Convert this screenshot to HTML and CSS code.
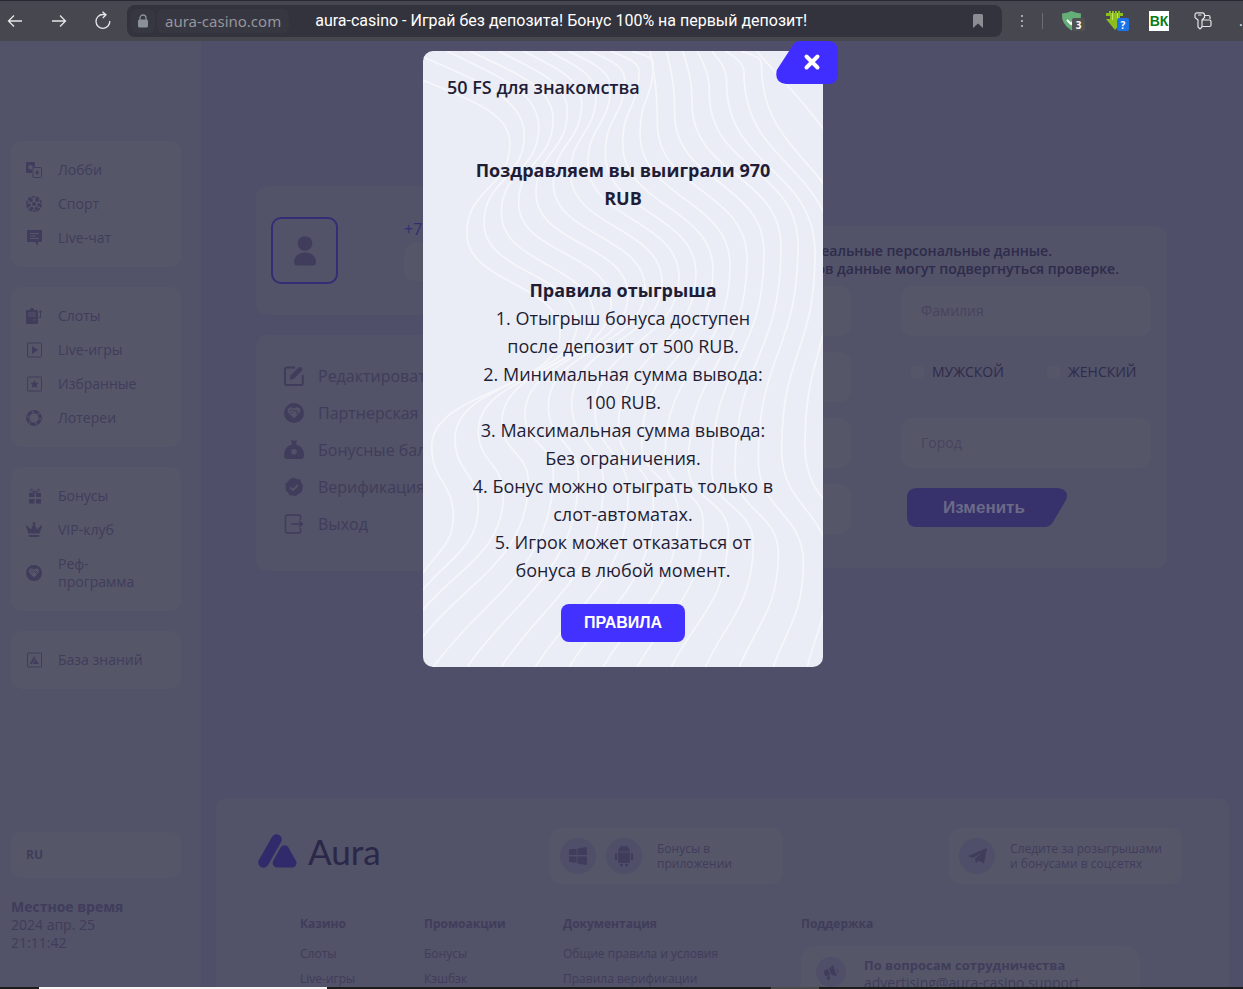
FILE: index.html
```html
<!DOCTYPE html>
<html lang="ru">
<head>
<meta charset="utf-8">
<meta name="viewport" content="width=device-width, initial-scale=1">
<title>aura-casino - Играй без депозита! Бонус 100% на первый депозит!</title>
<link rel="stylesheet" href="styles.css">
</head>
<body>
<svg class="defs" aria-hidden="true">
  <symbol id="handshake" viewBox="0 0 20 20"><path fill="currentColor" fill-rule="evenodd" d="M10 0a10 10 0 1 1 0 20 10 10 0 0 1 0-20zM4.300 5.500C3.200 7 3.500 9 5 10.500l5 5 5-5c1.500-1.500 1.800-3.500.7-5C14.500 4 12.500 4 11 5l-1 .7L9 5c-1.500-1-3.500-1-4.700.5z"/><path d="M5.500 8 8 6.500l2 2 2-1.500 3.500 3.500M7 10.500l1.500-1M12 9l2 3" fill="none" stroke="currentColor" stroke-width="1"/></symbol>
</svg>

<header class="browser">
  <button class="tool" aria-label="Назад"><svg width="16" height="16" viewBox="0 0 16 16"><path d="M15 8H1.500M7 2.500 1.500 8 7 13.500"/></svg></button>
  <button class="tool" aria-label="Вперёд"><svg width="16" height="16" viewBox="0 0 16 16"><path d="M1 8h13.500M9 2.500 14.500 8 9 13.500"/></svg></button>
  <button class="tool" aria-label="Обновить"><svg width="18" height="20" viewBox="0 0 18 20"><path d="M15.800 10a6.900 6.900 0 1 1-7-6.500H12M8.500.8 12 3.700 8.800 7"/></svg></button>
  <div class="address">
    <span class="lock"><svg width="12" height="14" viewBox="0 0 12 14"><rect x="1" y="5.500" width="10" height="8" rx="1.500" fill="currentColor"/><path d="M3 6V4a3 3 0 0 1 6 0v2" fill="none" stroke="currentColor" stroke-width="1.300"/></svg></span>
    <span class="host">aura-casino.com</span>
    <span class="page-title">aura-casino - Играй без депозита! Бонус 100% на первый депозит!</span>
    <button class="bookmark" aria-label="Закладка"><svg width="10" height="14" viewBox="0 0 10 14"><path d="M0 1.500Q0 0 1.500 0h7Q10 0 10 1.500V14L5 9.500 0 14z" fill="currentColor"/></svg></button>
  </div>
  <button class="dots" aria-label="Меню"><svg width="4" height="14" viewBox="0 0 4 14"><path d="M1 1h2v2H1zM1 6h2v2H1zM1 11h2v2H1z" fill="currentColor"/></svg></button>
  <span class="divider"></span>
  <div class="extensions">
    <svg width="24" height="22" viewBox="0 0 24 22"><path d="M1 3.500Q6 3 10.500 1 15 3 20 3.500 21 14 10.500 20.500 0 14 1 3.500z" fill="#65ae78"/><path d="m6 10 4 4 3-4" fill="none" stroke="#fff" stroke-width="2"/><rect x="11" y="8" width="13" height="13" rx="2" fill="#515151"/><text x="17.500" y="18.500" class="badge-text">3</text></svg>
    <svg width="24" height="22" viewBox="0 0 24 22"><path d="M1 3h3V1h2v2h1V1h2v2h1V1h2v2h1V1h2v2h3v3h-3v3h4L10 20 1 9h4V6H1z" fill="#8cbf1e"/><path d="M7.500 3v7M12.500 3v7" stroke="#c3e160" stroke-width="1"/><rect x="12" y="8" width="12" height="13" rx="2" fill="#1a73e8"/><text x="18" y="18.500" class="badge-text">?</text></svg>
    <span class="bk">ВК</span>
    <svg width="18" height="18" viewBox="0 0 18 18"><path d="M1 3Q1 .8 3 .8h5.500q2 0 2 2.200v2.500L8 8v7l-2 2-2-2V8L1 5.500zM4 3h3.500M10.500 3.500h4q1.500 0 1.500 1.500v2M8 8h7.500q1.500 0 1.500 1.500V13q0 1.500-1.500 1.500H8" class="key-line"/></svg>
    <span class="more">.</span>
  </div>
</header>

<div class="app">
  <aside class="sidebar">
    <nav class="side-nav">
      <ul class="side-card">
        <li><a href="#"><svg viewBox="0 0 16 16"><path fill="currentColor" fill-rule="evenodd" d="M1 0h7q1 0 1 1v3.500H7.500Q6 4.500 6 6v5H1q-1 0-1-1V1q0-1 1-1zm3.500 3a2 2 0 1 0 0 4.500A2.200 2.200 0 0 0 4.500 3z"/><rect x="7" y="5.500" width="8.500" height="10" rx="1" class="line"/><path fill="currentColor" d="m11.200 8 2 2.500-2 2.500-2-2.500z"/></svg>Лобби</a></li>
        <li><a href="#"><svg viewBox="0 0 16 16"><circle cx="8" cy="8" r="7.200" fill="none" stroke="currentColor" stroke-width="1.500" stroke-dasharray="3.500 1"/><g fill="currentColor"><circle cx="8" cy="8" r="2"/><circle cx="5" cy="4" r="2"/><circle cx="11" cy="4" r="2"/><circle cx="3" cy="9" r="1.800"/><circle cx="13" cy="9" r="1.800"/><circle cx="5.700" cy="12.500" r="1.800"/><circle cx="10.300" cy="12.500" r="1.800"/></g></svg>Спорт</a></li>
        <li><a href="#"><svg viewBox="0 0 16 16"><path fill="currentColor" fill-rule="evenodd" d="M2 0h13q1 0 1 1v10q0 1-1 1h-3v4l-3-4H2q-1 0-1-1V1q0-1 1-1zm2 3v1h9V3zm0 2.500v1h6v-1zM4 8v1h9V8z"/></svg>Live-чат</a></li>
      </ul>
      <ul class="side-card">
        <li><a href="#"><svg viewBox="0 0 16 16"><path fill="currentColor" fill-rule="evenodd" d="M4 2V1l1-1h2l1 1v1h3q1 0 1 1v12q0 1-1 1H1q-1 0-1-1V3q0-1 1-1zM2.500 4.500v4h7v-4zm4.500 7v.8h3v-.8z"/><path d="M4 5v3M6 5v3M8 5v3M12.500 9.500h2V4" class="line"/><circle cx="14.500" cy="3.800" r="1.300" fill="currentColor"/></svg>Слоты</a></li>
        <li><a href="#"><svg viewBox="0 0 16 16"><rect x="1.500" y="1" width="14" height="14" rx="1" class="line"/><path fill="currentColor" d="m6 4 6 4-6 4z"/></svg>Live-игры</a></li>
        <li><a href="#"><svg viewBox="0 0 16 16"><rect x="1.500" y="1" width="14" height="14" rx="1" class="line"/><path fill="currentColor" d="m8.500 4 1.200 2.700 2.800.3-2 2 .5 3-2.500-1.500L6 12l.5-3-2-2 2.800-.3z"/></svg>Избранные</a></li>
        <li><a href="#"><svg viewBox="0 0 16 16"><circle cx="8" cy="8" r="6.300" fill="none" stroke="currentColor" stroke-width="3.200"/><circle cx="8" cy="8" r="6.200" fill="none" stroke="#565669" stroke-width="1.400" stroke-dasharray="2 4.500"/></svg>Лотереи</a></li>
      </ul>
      <ul class="side-card">
        <li><a href="#"><svg viewBox="0 0 16 16"><path fill="currentColor" d="M3 5h5.500v4H3zM10 5h5v4h-5zM3 11h5.500v4.500H3zM10 11h5v4.500h-5z"/><path d="M9 4.500Q4 4 4.500 1.500 6-.5 9 4.500q3-5 4.500-3Q14 4 9 4.500" class="line"/></svg>Бонусы</a></li>
        <li><a href="#"><svg viewBox="0 0 16 16"><path fill="currentColor" d="m2.500 11.500-2-6a1 1 0 1 1 1.500-.8L5 7.500l2.300-4.700a1.400 1.400 0 1 1 1.400 0L11 7.500l3-2.800a1 1 0 1 1 1.500.8l-2 6zM2.500 13h11v1.500l-1 .5h-9l-1-.5z"/></svg>VIP-клуб</a></li>
        <li class="tall"><a href="#"><svg viewBox="0 0 20 20"><use href="#handshake"/></svg><span>Реф-<br>программа</span></a></li>
      </ul>
      <ul class="side-card">
        <li><a href="#"><svg viewBox="0 0 16 16"><rect x="1.500" y="1" width="14" height="14" rx="1" class="line"/><path fill="currentColor" d="M4 11.500 8 4.500l1.500.8L6 12H4zM9.800 7l3 5H7z"/></svg>База знаний</a></li>
      </ul>
    </nav>
    <button class="language">RU</button>
    <div class="clock"><b>Местное время</b><br>2024 апр. 25<br>21:11:42</div>
  </aside>

  <main class="main">
    <div class="account">
      <div class="account-side">
        <section class="card profile">
          <div class="avatar"><svg width="22" height="30" viewBox="0 0 22 30"><circle cx="11" cy="7.500" r="7.300" fill="currentColor"/><path fill="currentColor" d="M0 26C0 20 5 16.500 11 16.500S22 20 22 26q0 3.500-3 3.500H3Q0 29.500 0 26z"/></svg></div>
          <div class="profile-info"><span>+7</span><div class="profile-box"></div></div>
        </section>
        <section class="card">
          <ul class="account-menu">
            <li><a href="#"><svg viewBox="0 0 20 20"><path d="M11 1.500H2.500Q1 1.500 1 3v14.500Q1 19 2.500 19H17q1.800 0 1.800-1.500V9" fill="none" stroke="currentColor" stroke-width="2"/><path fill="currentColor" d="m6 14 .5-4.500 8-8q1.500-1 3 0 1.500 1.500.5 3l-8 8z"/></svg>Редактировать</a></li>
            <li><a href="#"><svg viewBox="0 0 20 20"><use href="#handshake"/></svg>Партнерская</a></li>
            <li><a href="#"><svg viewBox="0 0 20 20"><path fill="currentColor" fill-rule="evenodd" d="m7 0 3 1 3-1-1 4.500q8 2 8 10.500 0 4-3 4H3q-3 0-3-4Q0 6.500 8 4.500zm3 9a2.800 2.800 0 1 0 0 5.600A2.800 2.800 0 0 0 10 9z"/></svg>Бонусные баллы</a></li>
            <li><a href="#"><svg viewBox="0 0 20 20"><path fill="currentColor" d="m10 .5 3 1.800 3.300.2.800 3.200L19 8.500 18.500 12l-1 3.200-3 1.500L12 19l-3-.6-3.300-.2-1.600-2.800L1.500 13l.3-3.300L1.500 6.500 4.200 4.600 6 2z"/><path d="m6 10.500 3 2.500 5-5" fill="none" stroke="#535368" stroke-width="1.800"/></svg>Верификация</a></li>
            <li><a href="#"><svg viewBox="0 0 20 20"><path d="M16.500 6V3q0-2-2-2H3Q1.500 1 1.500 3v14q0 2 1.500 2h11.500q2 0 2-2v-3M7 10h11M15 7l3.500 3-3.500 3" fill="none" stroke="currentColor" stroke-width="1.500"/></svg>Выход</a></li>
          </ul>
        </section>
      </div>
      <form class="card details">
        <p class="notice"><span>Указывайте реальные персональные данные.</span><span class="wide">При выводе призов данные могут подвергнуться проверке.</span></p>
        <div class="fields">
          <input type="text" aria-label="Имя">
          <input type="text" placeholder="Фамилия" aria-label="Фамилия">
          <input type="text" aria-label="Дата рождения">
          <div class="gender">
            <label><input type="checkbox">МУЖСКОЙ</label>
            <label><input type="checkbox">ЖЕНСКИЙ</label>
          </div>
          <input type="text" aria-label="Страна">
          <input type="text" placeholder="Город" aria-label="Город">
          <input type="text" aria-label="Адрес">
          <button type="button" class="change"><svg viewBox="0 0 160 39" preserveAspectRatio="none"><path d="M10 0h141q12 2 8 12l-13 22q-3 5-9 5H10Q0 39 0 29V10Q0 0 10 0z" fill="#37316c"/></svg><span>Изменить</span></button>
        </div>
      </form>
    </div>

    <footer class="footer">
      <div class="footer-top">
        <a class="logo" href="#"><svg width="39" height="34" viewBox="0 0 39 34"><path d="M5.500 28.500 18.500 5.500" stroke="currentColor" stroke-width="10.500" stroke-linecap="round"/><path d="M26.500 15.800 34 29H19.200z" fill="currentColor" stroke="currentColor" stroke-width="9" stroke-linejoin="round"/></svg><span>Aura</span></a>
        <div class="promo app-promo">
          <span class="disc"><svg width="18" height="18" viewBox="0 0 18 18"><path fill="currentColor" d="M0 2.500 7.500 1.800V8H0zM8.500 1.500 18 0v8H8.500zM0 9.500h7.500v6.300L0 15zM8.500 9.500H18V18l-9.500-1.500z"/></svg></span>
          <span class="disc"><svg width="18" height="22" viewBox="0 0 18 22"><path fill="currentColor" d="M3 7.500h12V17q0 1-1 1H4q-1 0-1-1zM3 6.500Q3.300 3 6 1.700L5 .3l.5-.3 1.200 1.500q2.300-.7 4.600 0L12.500 0l.5.3-1 1.400q2.700 1.300 3 4.800zM0 8h2v7H0zM16 8h2v7h-2zM5 19h3v1a1.500 1.500 0 0 1-3 0zM10 19h3v1a1.500 1.500 0 0 1-3 0z"/></svg></span>
          <p>Бонусы в<br>приложении</p>
        </div>
        <div class="promo">
          <span class="disc"><svg width="19" height="16" viewBox="0 0 19 16"><path fill="currentColor" d="M0 8 19 0l-3 15.500-5.500-3L8 15.500l-1-5L15 4 5 10z"/></svg></span>
          <p>Следите за розыгрышами<br>и бонусами в соцсетях</p>
        </div>
      </div>
      <div class="footer-links">
        <section><h3>Казино</h3><a href="#">Слоты</a><a href="#">Live-игры</a></section>
        <section><h3>Промоакции</h3><a href="#">Бонусы</a><a href="#">Кэшбэк</a></section>
        <section><h3>Документация</h3><a href="#">Общие правила и условия</a><a href="#">Правила верификации</a></section>
        <section><h3>Поддержка</h3>
          <div class="support">
            <span class="disc small"><svg width="15" height="15" viewBox="0 0 15 15"><path fill="currentColor" d="m5 4 4-4 4 11-5.500-1zM0 5.500 4 4l2 6-4 1.200Q0 10 0 5.500zM2.500 12 6 11v3.500l-2.500.5zM12.500 3q3 1.500 1 5l-.5-.5q1.500-2-.5-4z"/></svg></span>
            <p><b>По вопросам сотрудничества</b><br>advertising@aura-casino.support</p>
          </div>
        </section>
      </div>
    </footer>
  </main>

  <div class="overlay">
    <section class="modal" role="dialog" aria-labelledby="modal-title">
      <svg class="waves" id="waves" viewBox="9 33 1200 1848" preserveAspectRatio="none" aria-hidden="true"></svg>
      <button class="close" aria-label="Закрыть"><svg width="62" height="43" viewBox="0 0 62 43"><path d="M24 0h28q10 0 10 10v23q0 10-10 10H10Q-2 42 .8 29L17 4q2.500-4 7-4z" fill="#402dff"/><path d="m30.500 15.500 11 11M41.500 15.500l-11 11" stroke="#fff" stroke-width="4" stroke-linecap="round"/></svg></button>
      <h2 id="modal-title">50 FS для знакомства</h2>
      <p class="win">Поздравляем вы выиграли 970<br>RUB</p>
      <div class="rules">
        <h3>Правила отыгрыша</h3>
        <p>1. Отыгрыш бонуса доступен<br>после депозит от 500 RUB.</p>
        <p>2. Минимальная сумма вывода:<br>100 RUB.</p>
        <p>3. Максимальная сумма вывода:<br>Без ограничения.</p>
        <p>4. Бонус можно отыграть только в<br>слот-автоматах.</p>
        <p>5. Игрок может отказаться от<br>бонуса в любой момент.</p>
      </div>
      <button class="rules-button">ПРАВИЛА</button>
    </section>
  </div>
</div>
<div class="taskbar"><span class="task active"></span><span class="task"></span></div>
<script src="waves.js"></script>
</body>
</html>
```
FILE: waves.js
```js
// Draws the flowing contour lines behind the dialog text.
const starts = [[9, 120], [9, 50], [80, 33], [150, 33], [235, 33], [310, 33], [385, 33], [445, 33], [510, 33],
  [570, 33], [635, 33], [690, 33], [740, 33], [788, 33], [832, 33], [876, 33], [918, 33], [963, 33], [1010, 33]];
const bellyY = [880, 850, 830, 790, 765, 745, 725, 710, 700, 690, 675, 655, 635, 620, 615, 640, 650, 660, 670];
const waistY = [1220, 1196, 1172, 1148, 1124, 1100, 1090, 1110, 1160, 1210, 1250, 1280, 1290, 1290, 1260, 1230, 1220, 1210, 1200];
const hipY = [1430, 1400, 1365, 1325, 1300, 1310, 1330, 1360, 1390, 1420, 1450, 1480, 1510, 1540, 1570, 1580, 1580, 1580, 1580];
const ends = [[9, 1600], [9, 1650], [9, 1710], [9, 1790]];

const svg = document.getElementById('waves');
starts.forEach((start, i) => {
  const points = [start];
  const shoulder = [270 + 43 * i, 310 - 24 * i];
  const neck = [140 + 52 * i, 580 - 30 * i];
  if (shoulder[1] > 60) points.push(shoulder);
  if (neck[1] > 60) points.push(neck);
  points.push([420 + 51 * i, bellyY[i]], [35 + 70 * i, waistY[i]], [100 + 75 * i, hipY[i]]);
  points.push(ends[i] || [40 + 102 * (i - 4), 1881]);

  let d = `M${points[0]}`;
  for (let k = 1; k < points.length; k++) {
    const [ax, ay] = points[k - 1];
    const [bx, by] = points[k];
    const h = by - ay;
    const first = k === 1 ? [ax + (bx - ax) * 0.5, ay + h * 0.3] : [ax, ay + h * 0.5];
    const second = k === points.length - 1 ? [bx + (ax - bx) * 0.4, by - h * 0.35] : [bx, by - h * 0.5];
    d += `C${first} ${second} ${bx},${by}`;
  }
  const path = document.createElementNS('http://www.w3.org/2000/svg', 'path');
  path.setAttribute('d', d);
  svg.appendChild(path);
});
```
FILE: styles.css
```css
* { box-sizing: border-box; }
body {
  margin: 0;
  height: 100vh;
  display: flex;
  flex-direction: column;
  overflow: hidden;
  background: #4f4f69;
  color: #3f3d5b;
  font: 14px/18px "Open Sans", "Noto Sans", sans-serif;
}
button, input { font: inherit; color: inherit; border: 0; padding: 0; background: none; }
a { color: inherit; text-decoration: none; }
ul { list-style: none; margin: 0; padding: 0; }
p, h2, h3 { margin: 0; }
svg { flex: none; display: block; }
.defs { position: absolute; width: 0; height: 0; }
.line { fill: none; stroke: currentColor; stroke-width: 1; }

/* Browser bar */
.browser {
  flex: none;
  height: 41px;
  display: flex;
  align-items: center;
  border-top: 1px solid #282833;
  background: #47474f;
  padding-left: 7px;
  overflow: hidden;
}
.tool { flex: none; display: flex; width: 16px; margin-right: 28px; justify-content: center; }
.tool svg { fill: none; stroke: #e6e6e8; stroke-width: 1.3; }
.address {
  flex: 1;
  display: flex;
  align-items: center;
  height: 32px;
  border-radius: 8px;
  background: #33333d;
  padding: 0 19px 0 4px;
  margin-left: -12px;
  min-width: 0;
}
.lock { width: 24px; height: 24px; display: grid; place-items: center; color: #8a9198; background: #363741; border-radius: 6px; }
.host {
  margin-left: 2px;
  padding: 0 8px;
  border-radius: 6px;
  background: #363741;
  color: #96969c;
  font: 15px/24px "Noto Sans", sans-serif;
}
.page-title { flex: 1; margin-left: 26px; color: #fff; white-space: nowrap; overflow: hidden; font: 16px/24px Roboto, sans-serif; }
.bookmark { color: #8c8c93; }
.dots { color: #a5a5aa; margin-left: 18px; }
.divider { width: 1px; height: 16px; background: #6c6c73; margin: 0 18px; }
.extensions { display: flex; align-items: center; gap: 20px; }
.badge-text { font: bold 10px "Noto Sans", sans-serif; fill: #fff; text-anchor: middle; }
.bk { width: 20px; height: 20px; background: #fff; color: #0a7d12; font: bold 14px/20px "Liberation Sans Narrow", "Liberation Sans", sans-serif; text-align: center; margin-right: 5px; }
.key-line { fill: none; stroke: #e6e6e8; stroke-width: 1.2; }
.more { width: 11px; padding-left: 7px; color: #e6e6e8; }

/* Page frame */
.app { flex: 1; min-height: 0; display: flex; position: relative; }
.sidebar { flex: none; width: 201px; padding: 100px 20px 0 11px; background: #525268; }
.side-nav { display: grid; gap: 20px; }
.side-card { padding: 12px 15px; border-radius: 10px; background: #565669; }
.side-card a { display: flex; align-items: center; gap: 16px; height: 34px; }
.side-card .tall a { height: 52px; }
.side-card svg { width: 16px; height: 16px; }
.language {
  display: block;
  width: 100%;
  height: 46px;
  margin: 143px 0 20px;
  padding-left: 15px;
  border-radius: 10px;
  background: #565669;
  text-align: left;
  font-size: 12px;
  font-weight: 700;
}

.main { flex: 1; min-width: 0; display: flex; flex-direction: column; padding: 145px 14px 0 15px; }
.card { background: #525268; border-radius: 10px; }
.account { flex: none; display: grid; grid-template-columns: 309px 1fr; gap: 20px; margin: 0 62px 227px 40px; align-items: start; }
.account-side { display: grid; gap: 20px; }
.profile { display: flex; align-items: start; gap: 66px; padding: 31px 15px; }
.avatar { display: grid; place-items: center; width: 67px; height: 67px; border: 2px solid #332d75; border-radius: 10px; }
.profile-info { flex: 1; padding-top: 3px; color: #332d75; font-size: 16px; }
.profile-box { height: 38px; margin-top: 5px; border-radius: 10px; background: #565669; }
.account-menu { padding: 22px 28px 29px; font-size: 16px; }
.account-menu a { display: flex; align-items: center; gap: 14px; height: 37px; }
.account-menu svg { width: 20px; height: 20px; }

.details { margin-top: 40px; padding: 16px 16px 34px; color: #2e2b4b; }
.notice { font-size: 14px; font-weight: 600; padding-bottom: 8px; }
.notice span { display: block; text-align: right; padding-right: 99px; }
.notice .wide { padding-right: 32px; }
.fields { display: grid; grid-template-columns: 1fr 1fr; gap: 16px 50px; }
.fields input[type="text"] { width: 100%; height: 50px; border-radius: 10px; padding: 0 20px 2px; background: #565669; }
.fields input::placeholder { color: #46445e; opacity: 1; }
.gender { display: grid; grid-template-columns: 136px 1fr; align-items: center; padding: 0 0 10px 10px; }
.gender label { display: flex; align-items: center; gap: 8px; }
.gender input { appearance: none; flex: none; width: 13px; height: 13px; margin: 0; border-radius: 3px; background: #565669; }
.change { position: relative; width: 160px; height: 39px; margin: 4px 0 0 6px; }
.change svg { position: absolute; inset: 0; width: 100%; height: 100%; }
.change span { position: relative; color: #6b6a87; font: bold 17px/38px "Liberation Sans", sans-serif; padding-right: 6px; }

/* Footer */
.footer { flex: 1; min-height: 0; overflow: hidden; border-radius: 10px 10px 0 0; background: #525268; padding: 30px 47px 0 42px; }
.footer-top { display: flex; align-items: center; height: 56px; }
.logo { display: flex; align-items: center; gap: 11px; color: #312b6c; height: 44px; margin-bottom: 10px; }
.logo span { color: #2a2749; font: 400 35px/40px Lato, "Open Sans", sans-serif; }
.promo { display: flex; align-items: center; gap: 15px; width: 233px; height: 56px; padding: 0 10px; border-radius: 10px; background: #565669; font-size: 12px; line-height: 15px; white-space: nowrap; }
.app-promo { margin: 0 166px 0 auto; }
.app-promo .disc + .disc { margin-left: -5px; }
.disc { flex: none; display: grid; place-items: center; width: 36px; height: 36px; border-radius: 50%; background: #4f4f69; }
.disc.small { width: 30px; height: 30px; }
.footer-links { display: grid; grid-template-columns: 124px 139px 238px 339px; margin: 31px 0 0 42px; font-size: 12px; }
.footer-links h3 { font-size: 12px; line-height: 18px; margin-bottom: 8px; }
.footer-links a { display: block; line-height: 25px; }
.footer-links .support { display: flex; gap: 18px; margin-top: 13px; padding: 10px 15px; border-radius: 14px; background: #565669; font-size: 14px; line-height: 18px; }
.support b { font-size: 13px; }
.support .disc { margin-top: 1px; }

/* Dialog */
.overlay { position: absolute; inset: 0; display: flex; align-items: flex-start; justify-content: center; padding: 10px 0 0 3px; }
.modal {
  position: relative;
  width: 400px;
  padding: 22px 24px 25px;
  border-radius: 10px;
  background: #eaedf5;
  color: #1f1d36;
  font-size: 18px;
  line-height: 28px;
  text-align: center;
}
.modal > * { position: relative; }
.modal .waves { position: absolute; inset: 0; width: 100%; height: 100%; border-radius: 10px; overflow: hidden; }
.waves path { fill: none; stroke: #f6f7fb; stroke-width: 5; }
.modal .close { position: absolute; top: -10px; right: -15px; }
.modal h2 { font-size: 18px; font-weight: 600; text-align: left; margin-bottom: 55px; }
.modal h3 { font-size: 18px; font-weight: 700; }
.win { font-weight: 700; margin-bottom: 64px; }
.rules-button { width: 124px; height: 38px; margin-top: 20px; border-radius: 8px; background: #4332ff; color: #fff; font: bold 16px/38px "Liberation Sans", sans-serif; }

/* Strip of the desktop taskbar */
.taskbar { flex: none; display: flex; height: 2px; background: #1c1c1c; z-index: 1; }
.task { width: 48px; margin-left: 444px; background: #4a4a4a; }
.task.active { width: 288px; margin-left: 39px; background: #f4f4f4; }
```
